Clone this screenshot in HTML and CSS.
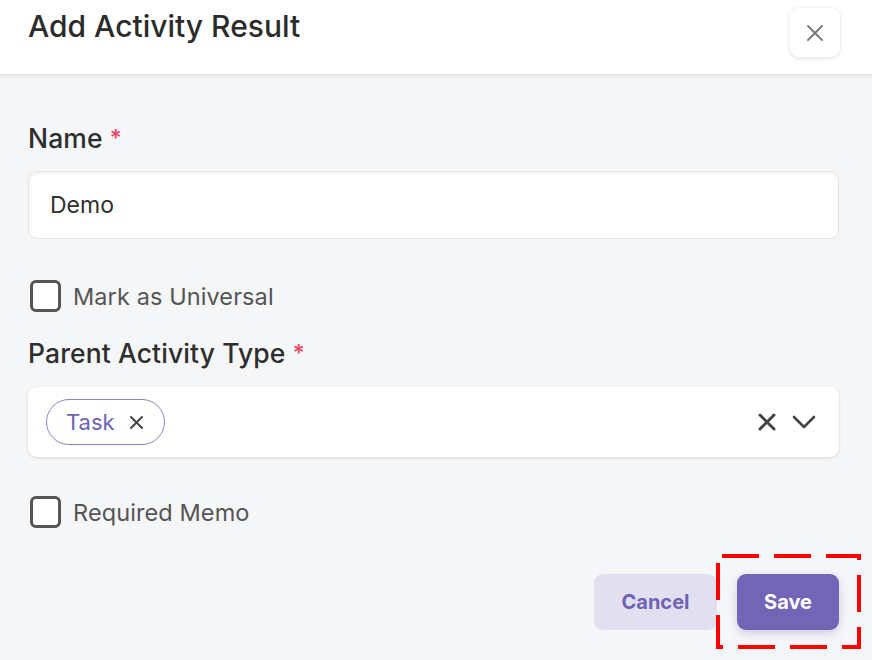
FILE: index.html
```html
<!DOCTYPE html>
<html lang="en">
<head>
<meta charset="utf-8">
<title>Add Activity Result</title>
<link rel="stylesheet" href="styles.css">
</head>
<body>
<div class="modal">
  <header class="modal-header">
    <h1 class="modal-title">Add Activity Result</h1>
    <button class="close-btn" aria-label="Close">
      <svg width="18" height="18" viewBox="0 0 18 18"><path d="M2 2L16 16M16 2L2 16" stroke="#777" stroke-width="1.8" stroke-linecap="round"/></svg>
    </button>
  </header>
  <main class="modal-body">
    <label class="field-label">Name <span class="req">*</span></label>
    <div class="text-input">Demo</div>

    <div class="check-row first-check">
      <span class="checkbox"></span>
      <span class="check-label">Mark as Universal</span>
    </div>

    <label class="field-label parent-label">Parent Activity Type <span class="req">*</span></label>
    <div class="select">
      <span class="tag">Task
        <svg class="tag-x" width="15" height="15" viewBox="0 0 15 15"><path d="M2 2L13 13M13 2L2 13" stroke="#444" stroke-width="2" stroke-linecap="round"/></svg>
      </span>
      <span class="select-icons">
        <svg width="18" height="18" viewBox="0 0 18 18"><path d="M2 2L16 16M16 2L2 16" stroke="#444" stroke-width="3" stroke-linecap="round"/></svg>
        <svg width="24" height="14" viewBox="0 0 24 14"><path d="M2 2L12 12L22 2" fill="none" stroke="#444" stroke-width="2.6" stroke-linecap="round" stroke-linejoin="round"/></svg>
      </span>
    </div>

    <div class="check-row second-check">
      <span class="checkbox"></span>
      <span class="check-label">Required Memo</span>
    </div>

    <div class="actions">
      <button class="btn btn-cancel">Cancel</button>
      <div class="save-wrap">
        <button class="btn btn-save">Save</button>
        <svg class="highlight" width="145" height="95" viewBox="0 0 145 95"><rect x="2" y="2" width="141" height="91" fill="none" stroke="#ff0000" stroke-width="4" stroke-dasharray="37 15" stroke-dashoffset="-4"/></svg>
      </div>
    </div>
  </main>
</div>
</body>
</html>
```
FILE: styles.css
```css
* { box-sizing: border-box; }
html, body { margin: 0; padding: 0; }
body {
  width: 872px;
  height: 660px;
  overflow: hidden;
  background: #f5f6f8;
  font-family: "Inter", "Noto Sans", sans-serif;
  color: #2e2e2e;
}
.modal { width: 872px; height: 660px; background: #f5f6f8; }
.modal-header {
  height: 75px;
  background: #fff;
  border-bottom: 1px solid #e4e4e4;
  box-shadow: 0 2px 4px rgba(0,0,0,0.07);
  display: flex;
  justify-content: space-between;
  align-items: flex-start;
  padding: 0 32px 0 28px;
}
.modal-title {
  margin: 6px 0 0;
  font-size: 30px;
  line-height: 40px;
  font-weight: 500;
  letter-spacing: 0;
  color: #2b2b2b;
}
.close-btn {
  margin-top: 8px;
  width: 50px;
  height: 49px;
  border: none;
  border-radius: 9px;
  background: #fff;
  box-shadow: 0 1px 4px rgba(0,0,0,0.14);
  display: flex;
  align-items: center;
  justify-content: center;
  padding: 0;
}
.modal-body {
  padding: 47px 33px 0 28px;
  display: flex;
  flex-direction: column;
}
.field-label {
  font-size: 26.5px;
  line-height: 32px;
  font-weight: 500;
  color: #2e2e2e;
  letter-spacing: 0.1px;
}
.req { color: #f0445e; font-size: 23px; vertical-align: top; }
.text-input {
  margin-top: 17px;
  height: 68px;
  background: #fff;
  border: 1px solid #e8e5e1;
  border-radius: 9px;
  box-shadow: inset 1px 2px 3px rgba(0,0,0,0.05);
  display: flex;
  align-items: center;
  padding-left: 21px;
  font-size: 23px;
  color: #2f2f2f;
}
.check-row {
  display: flex;
  align-items: center;
  gap: 12px;
  height: 32px;
  padding-left: 2px;
}
.first-check { margin-top: 41px; }
.second-check { margin-top: 39px; }
.checkbox {
  width: 31px;
  height: 32px;
  border: 3px solid #555;
  border-radius: 6px;
  background: #fff;
}
.check-label {
  font-size: 23.5px;
  color: #555;
  letter-spacing: 0.1px;
}
.parent-label { margin-top: 25px; }
.select {
  margin-top: 18px;
  height: 70px;
  background: #fff;
  border-radius: 9px;
  box-shadow: 0 1px 3px rgba(0,0,0,0.13);
  display: flex;
  align-items: center;
  justify-content: space-between;
  padding: 0 23px 0 18px;
}
.tag {
  height: 46px;
  border: 1.5px solid #8b81c9;
  border-radius: 23px;
  display: flex;
  align-items: center;
  gap: 14px;
  padding: 0 20px 0 19px;
  font-size: 22px;
  color: #6f63b5;
}
.select-icons { display: flex; align-items: center; gap: 16px; }
.actions {
  margin-top: 46px;
  display: flex;
  justify-content: flex-end;
  gap: 20px;
}
.btn {
  height: 56px;
  border: none;
  border-radius: 9px;
  font-family: inherit;
  font-size: 20px;
  font-weight: 700;
}
.btn-cancel {
  width: 123px;
  background: #e2dff1;
  color: #6f63b5;
}
.save-wrap { position: relative; }
.btn-save {
  width: 102px;
  background: #7265b5;
  color: #fff;
  box-shadow: 0 3px 8px rgba(114,101,181,0.3);
}
.highlight {
  position: absolute;
  left: -21px;
  top: -20px;
}
```
